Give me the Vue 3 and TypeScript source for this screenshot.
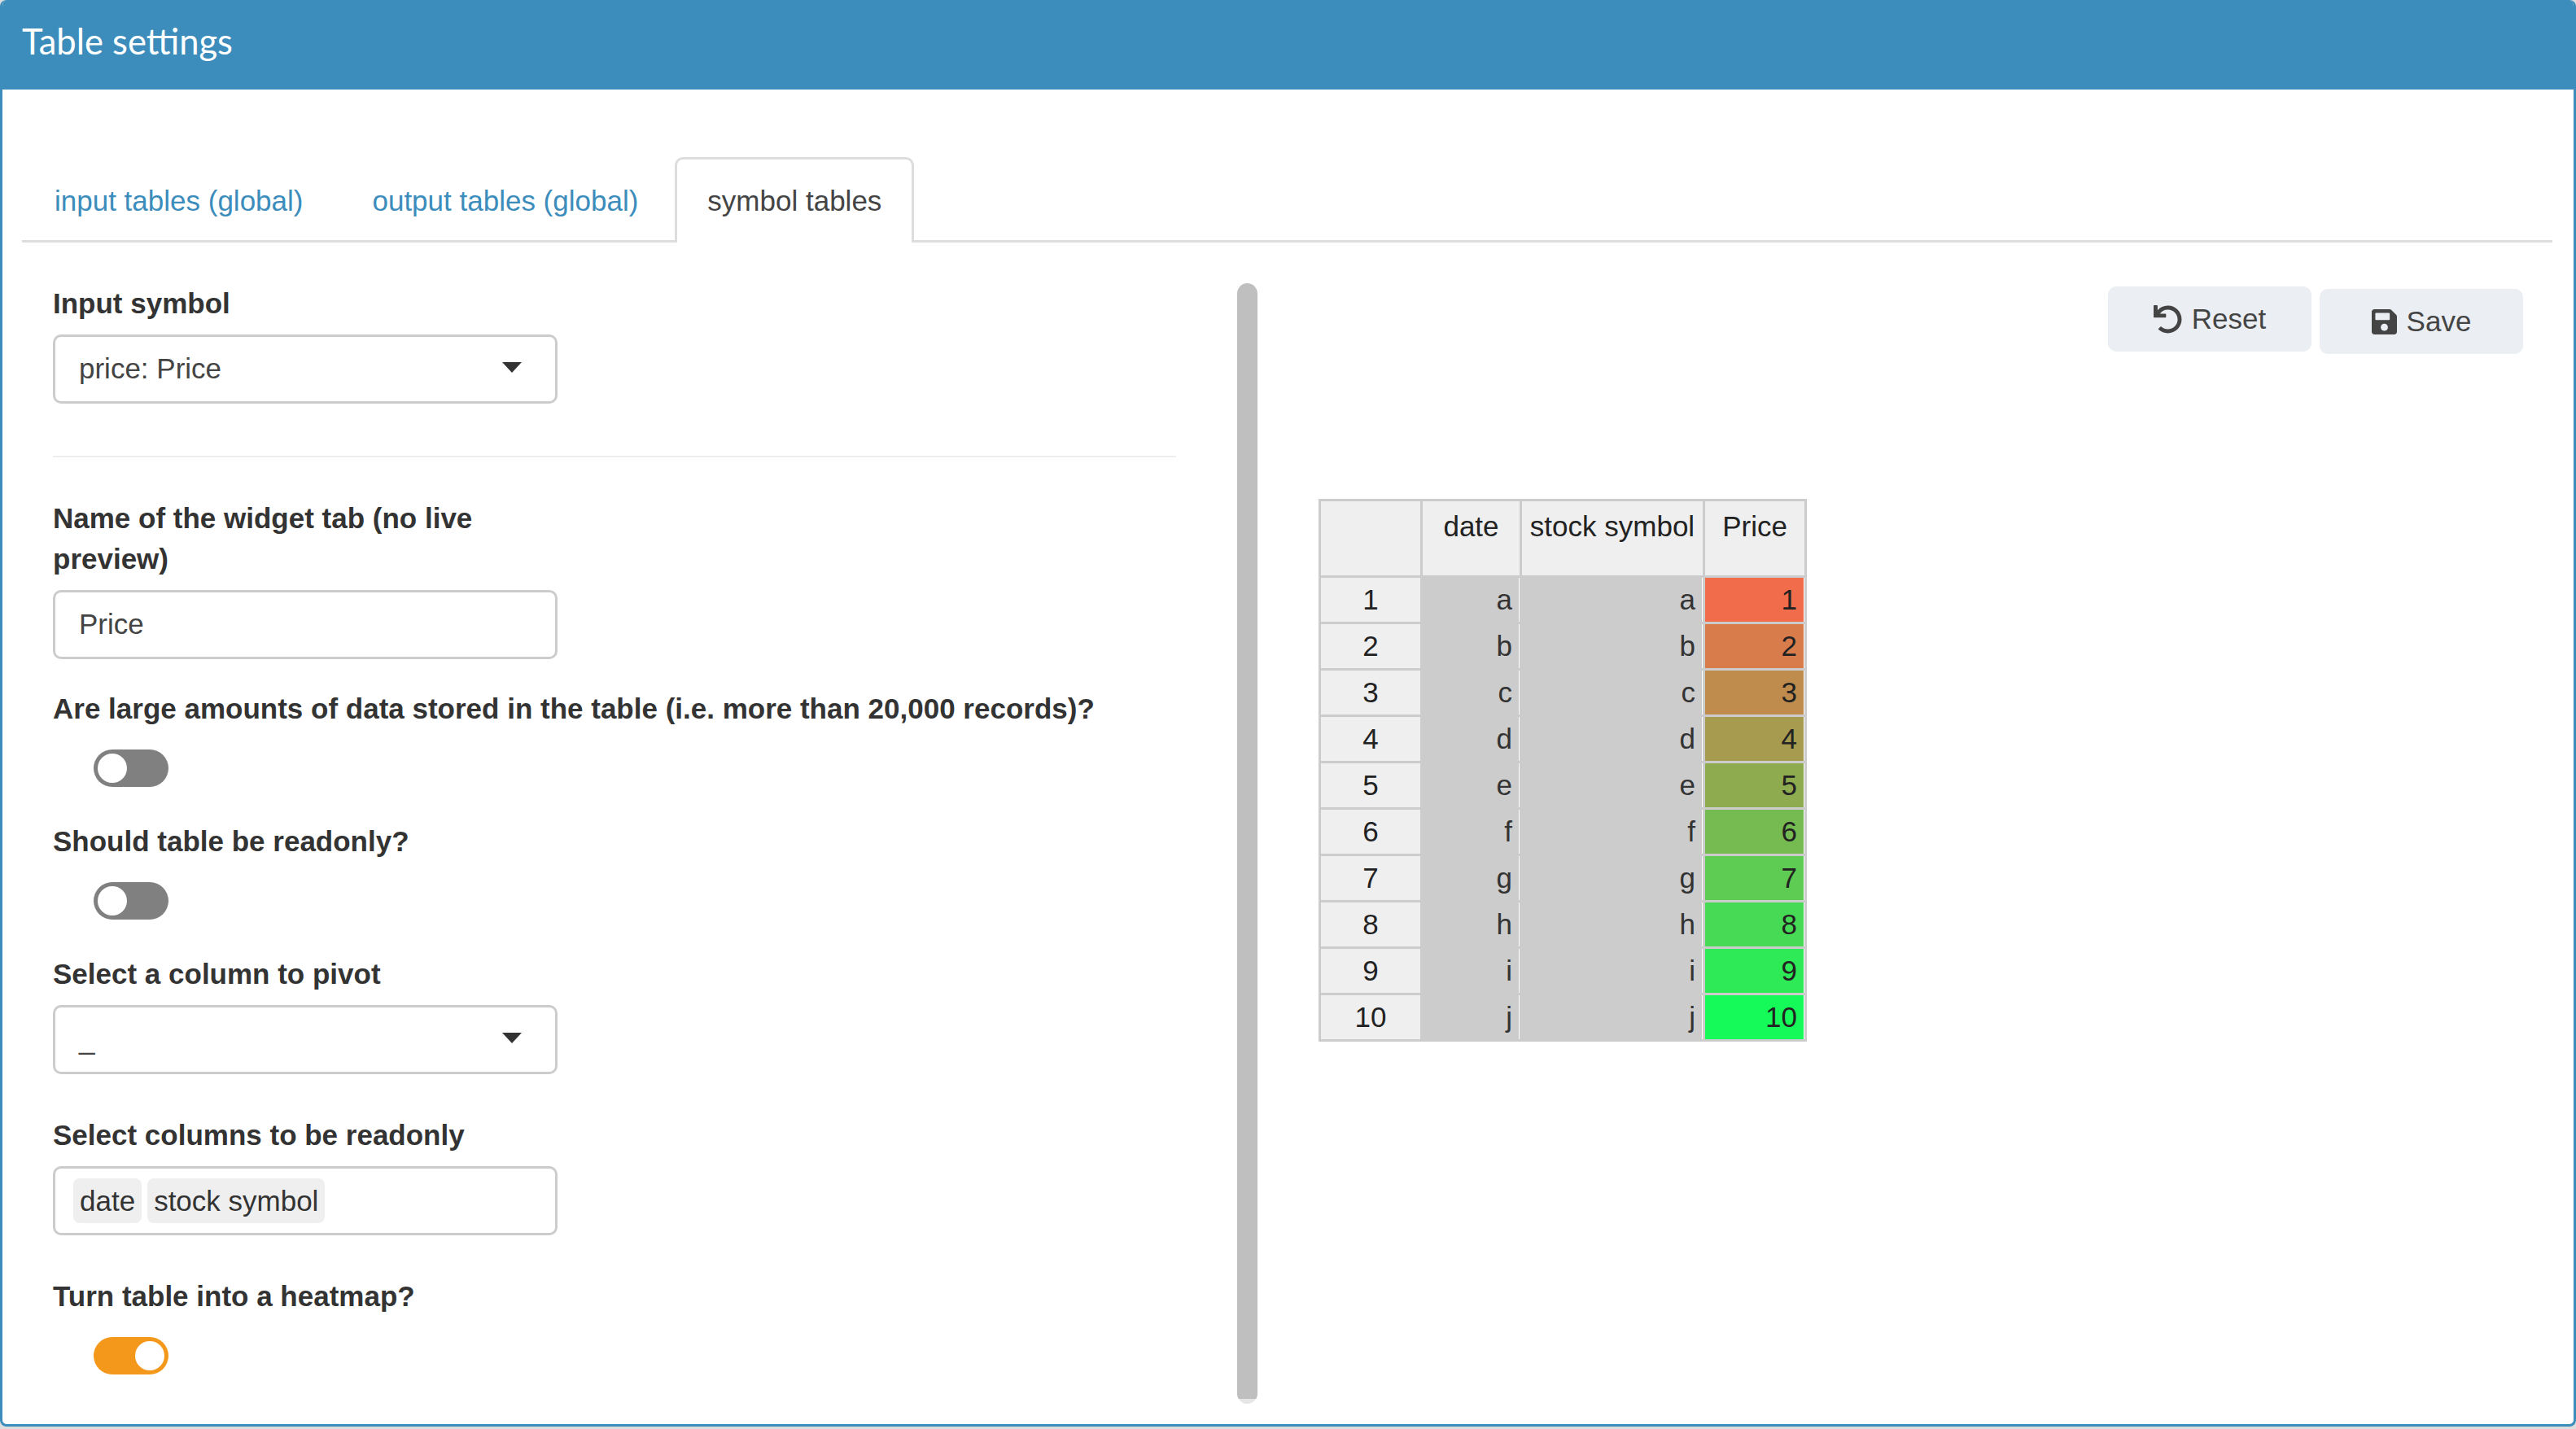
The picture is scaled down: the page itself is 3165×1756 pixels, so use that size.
<script setup lang="ts">
const rows = ['a', 'b', 'c', 'd', 'e', 'f', 'g', 'h', 'i', 'j'].map((letter, i) => {
  const t = i / 9
  const r = Math.round(240 + (21 - 240) * t)
  const g = Math.round(108 + (250 - 108) * t)
  const b = Math.round(74 + (88 - 74) * t)
  return { id: i + 1, letter, color: `rgb(${r}, ${g}, ${b})` }
})
</script>

<template>
  <div class="box">
    <header class="box-header">Table settings</header>
    <div class="box-body">
      <nav class="tabs">
        <a class="tab">input tables (global)</a>
        <a class="tab">output tables (global)</a>
        <a class="tab active">symbol tables</a>
      </nav>
      <div class="panes">
        <form class="form">
          <label class="label">Input symbol</label>
          <div class="control select">price: Price<span class="caret"></span></div>
          <hr class="divider" />

          <label class="label narrow">Name of the widget tab (no live preview)</label>
          <div class="control">Price</div>

          <label class="label gap-s">Are large amounts of data stored in the table (i.e. more than 20,000 records)?</label>
          <div class="toggle"><span class="knob"></span></div>

          <label class="label gap-m">Should table be readonly?</label>
          <div class="toggle"><span class="knob"></span></div>

          <label class="label gap-m">Select a column to pivot</label>
          <div class="control select">_<span class="caret"></span></div>

          <label class="label gap-l">Select columns to be readonly</label>
          <div class="control chips">
            <span class="chip">date</span>
            <span class="chip">stock symbol</span>
          </div>

          <label class="label gap-l">Turn table into a heatmap?</label>
          <div class="toggle on"><span class="knob"></span></div>
        </form>

        <div class="scrollbar"><div class="thumb"></div></div>

        <section class="preview">
          <div class="actions">
            <button type="button" class="btn">
              <svg class="icon-reset" viewBox="0 0 512 512" fill="currentColor">
                <path d="M212.333 224.333H12c-6.627 0-12-5.373-12-12V12C0 5.373 5.373 0 12 0h48c6.627 0 12 5.373 12 12v78.112C117.773 39.279 184.26 7.47 258.175 8.007c136.906.994 246.448 111.623 246.157 248.532C504.041 393.258 393.12 504 256.333 504c-64.089 0-122.496-24.313-166.51-64.215-5.099-4.622-5.334-12.554-.467-17.42l33.967-33.967c4.474-4.474 11.662-4.717 16.401-.525C170.76 415.336 211.58 432 256.333 432c97.268 0 176-78.716 176-176 0-97.267-78.716-176-176-176-58.496 0-110.28 28.476-142.274 72.333h98.274c6.627 0 12 5.373 12 12v48c0 6.627-5.373 12-12 12z" />
              </svg>
              Reset
            </button>
            <button type="button" class="btn save">
              <svg class="icon-save" viewBox="0 32 448 448" fill="currentColor">
                <path d="M433.941 129.941l-83.882-83.882A48 48 0 0 0 316.118 32H48C21.49 32 0 53.49 0 80v352c0 26.51 21.49 48 48 48h352c26.51 0 48-21.49 48-48V163.882a48 48 0 0 0-14.059-33.941zM224 416c-35.346 0-64-28.654-64-64 0-35.346 28.654-64 64-64s64 28.654 64 64c0 35.346-28.654 64-64 64zm96-304.520V212c0 6.627-5.373 12-12 12H76c-6.627 0-12-5.373-12-12V108c0-6.627 5.373-12 12-12h228.520c3.183 0 6.235 1.264 8.485 3.515l3.480 3.480A11.996 11.996 0 0 1 320 111.480z" />
              </svg>
              Save
            </button>
          </div>

          <table class="grid">
            <colgroup>
              <col class="c-head" />
              <col class="c-date" />
              <col class="c-symbol" />
              <col class="c-price" />
            </colgroup>
            <thead>
              <tr>
                <th></th>
                <th>date</th>
                <th>stock symbol</th>
                <th>Price</th>
              </tr>
            </thead>
            <tbody>
              <tr v-for="row in rows" :key="row.id">
                <th>{{ row.id }}</th>
                <td class="readonly">{{ row.letter }}</td>
                <td class="readonly">{{ row.letter }}</td>
                <td :style="{ backgroundColor: row.color }">{{ row.id }}</td>
              </tr>
            </tbody>
          </table>
        </section>
      </div>
    </div>
  </div>
</template>

<style scoped>
.box {
  box-sizing: border-box;
  height: 1753px;
  background: #fff;
  border: 3px solid #3c8dbc;
  border-top: 0;
  border-radius: 8px;
  font-family: 'Liberation Sans', Arial, sans-serif;
  font-size: 35px;
  line-height: 50px;
  color: #333;
  overflow: hidden;
}

.box-header {
  height: 110px;
  margin: 0 -3px;
  padding-left: 27px;
  background: #3c8dbc;
  color: #fff;
  font-family: Lato, sans-serif;
  font-size: 43.5px;
  line-height: 100px;
}

.box-body {
  padding: 83px 26px 0 24px;
}

.tabs {
  display: flex;
  gap: 5px;
  border-bottom: 3px solid #ddd;
}

.tab {
  box-sizing: border-box;
  height: 105px;
  padding: 26px 37px;
  margin-bottom: -3px;
  border: 3px solid transparent;
  border-bottom: 0;
  border-radius: 10px 10px 0 0;
  color: #3c8dbc;
}

.tab.active {
  border-color: #ddd;
  background: #fff;
  color: #444;
}

.panes {
  display: flex;
  align-items: flex-start;
}

.form {
  width: 1493px;
  padding: 50px 75px 0 38px;
  box-sizing: border-box;
}

.label {
  display: block;
  margin-bottom: 13px;
  font-weight: 700;
  color: #333;
}

.narrow {
  width: 620px;
}

.gap-s {
  margin-top: 36px;
}

.gap-m {
  margin-top: 42px;
}

.gap-l {
  margin-top: 50px;
}

.control {
  box-sizing: border-box;
  position: relative;
  width: 620px;
  height: 85px;
  padding: 14px 29px;
  border: 3px solid #ccc;
  border-radius: 10px;
  color: #444;
}

.caret {
  position: absolute;
  top: 31px;
  right: 41px;
  width: 0;
  height: 0;
  border-style: solid;
  border-width: 13px 12.5px 0;
  border-color: #333 transparent transparent;
}

.divider {
  height: 2px;
  margin: 64px 0 50px;
  border: 0;
  background: #eee;
}

.chips {
  display: flex;
  gap: 7px;
  padding: 12px 22px;
}

.chip {
  height: 55px;
  padding: 0 8px;
  border-radius: 8px;
  background: #efefef;
  line-height: 55px;
  color: #333;
}

.toggle {
  position: relative;
  width: 92px;
  height: 46px;
  margin: 25px 0 0 50px;
  border-radius: 23px;
  background: #808080;
}

.knob {
  position: absolute;
  top: 5px;
  left: 5px;
  width: 36px;
  height: 36px;
  border-radius: 50%;
  background: #fff;
}

.toggle.on {
  background: #f4981b;
}

.toggle.on .knob {
  left: 51px;
}

.scrollbar {
  flex: none;
  width: 25px;
  height: 1377px;
  margin-top: 50px;
  border-radius: 13px;
  background: #e6e6e6;
  overflow: hidden;
}

.thumb {
  height: 1371px;
  border-radius: 13px 13px 0 0;
  background: #bfbfbf;
}

.preview {
  flex: 1;
  padding: 54px 36px 0 75px;
}

.actions {
  display: flex;
  justify-content: flex-end;
  align-items: flex-start;
  gap: 10px;
  height: 261px;
}

.btn {
  display: flex;
  align-items: center;
  justify-content: center;
  gap: 12px;
  width: 250px;
  height: 80px;
  padding: 0;
  border: 0;
  border-radius: 10px;
  background: #ebeef3;
  color: #444;
  font: inherit;
}

.btn.save {
  margin-top: 3px;
}

.icon-reset {
  width: 35px;
  height: 35px;
}

.icon-save {
  width: 31px;
  height: 31px;
}

.grid {
  table-layout: fixed;
  width: 600px;
  border-collapse: separate;
  border-spacing: 0;
  color: #222;
}

.c-head {
  width: 128px;
}

.c-date {
  width: 122px;
}

.c-symbol {
  width: 225px;
}

.c-price {
  width: 125px;
}

.grid th,
.grid td {
  box-sizing: border-box;
  padding: 2px 9px;
  border-right: 3px solid #ccc;
  border-bottom: 3px solid #ccc;
  font-weight: 400;
  white-space: nowrap;
}

.grid th {
  background: #efefef;
  text-align: center;
}

.grid th:first-child {
  border-left: 3px solid #ccc;
}

.grid thead th {
  height: 97px;
  padding: 6px 0 0;
  border-top: 3px solid #ccc;
  vertical-align: top;
}

.grid td {
  text-align: right;
  box-shadow: inset -1px 0 #fff;
}

.grid td.readonly {
  background: #ccc;
  color: #333;
}
</style>

<style>
body {
  background: #ddd;
}
</style>
